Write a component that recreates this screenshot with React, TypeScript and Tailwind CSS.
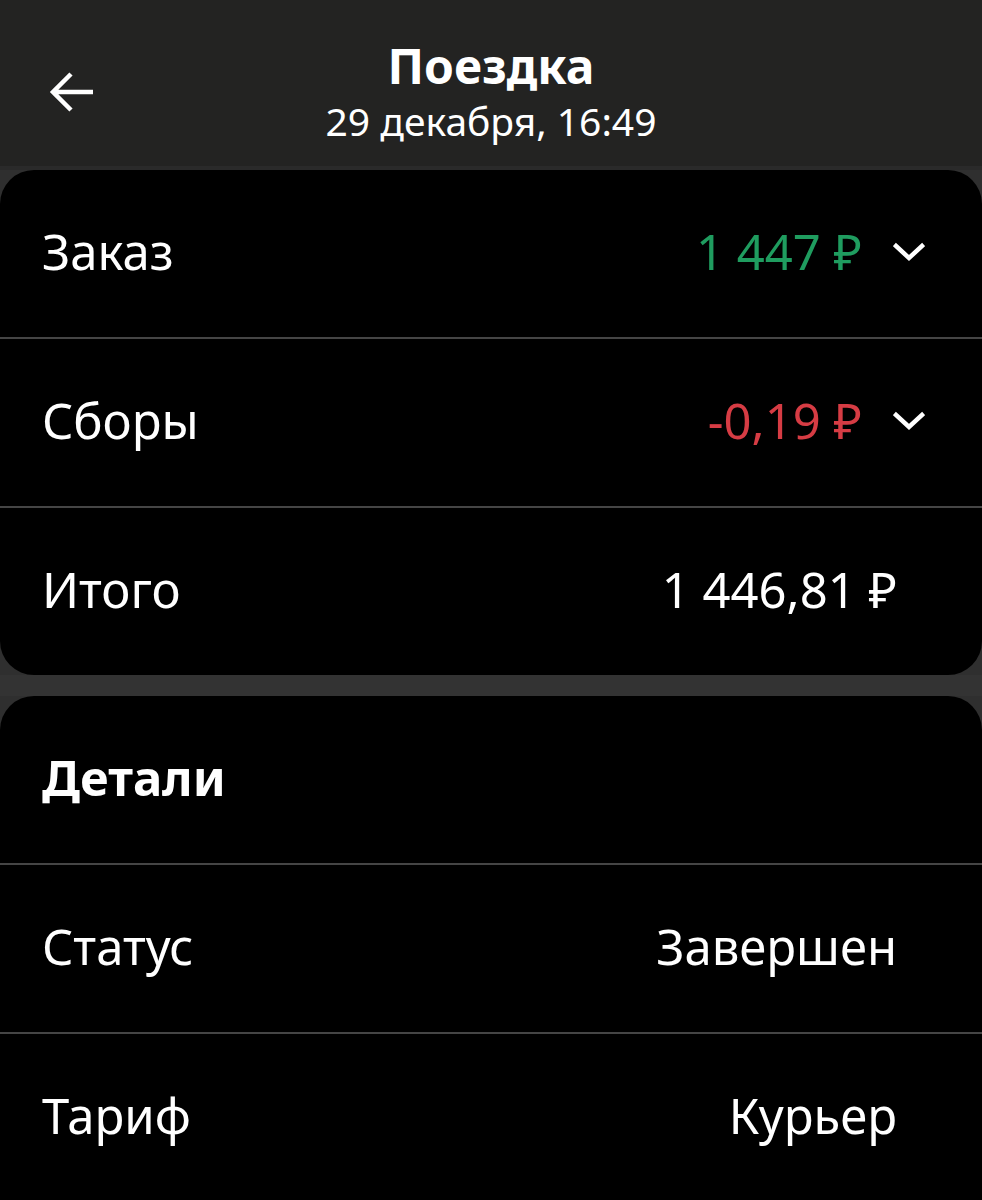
import React from 'react';

const font = { fontFamily: '"Noto Sans", "Open Sans", sans-serif' };

const Chevron = () => (
  <svg width="32" height="20" viewBox="0 0 32 20" fill="none" className="ml-[31px]">
    <path d="M3 4l13 12L29 4" stroke="#fff" strokeWidth="4.5" strokeLinecap="square" />
  </svg>
);

type RowProps = {
  label: string;
  value?: string;
  valueClass?: string;
  chevron?: boolean;
  bold?: boolean;
  divider?: boolean;
};

const Row: React.FC<RowProps> = ({ label, value, valueClass = 'text-white', chevron, bold, divider }) => (
  <>
    <div className="h-[167px] flex items-center justify-between pl-[42px] pr-[85px] pb-[4px]">
      <span className={`text-[49px] text-white ${bold ? 'font-bold' : ''}`}>{label}</span>
      {value && (
        <div className={`flex items-center ${chevron ? '-mr-[28px]' : ''}`}>
          <span className={`text-[49px] ${valueClass}`}>{value}</span>
          {chevron && <Chevron />}
        </div>
      )}
    </div>
    {divider && <div className="h-[2px] bg-[#454545]" />}
  </>
);

export default function App() {
  return (
    <div className="min-h-[1200px] bg-[#2f2f2f] overflow-hidden" style={font}>
      {/* Header */}
      <div className="h-[166px] bg-[#232322] relative flex flex-col items-center pt-[36px]">
        <button className="absolute left-[47px] top-[70px] w-[48px] h-[44px]">
          <svg width="48" height="44" viewBox="0 0 48 44" fill="none">
            <path d="M46 22H6M24 4L6 22l18 18" stroke="#fff" strokeWidth="4.5" />
          </svg>
        </button>
        <div className="text-[48px] font-bold text-white leading-[60px]">Поездка</div>
        <div className="text-[39px] text-white leading-[50px]">29 декабря, 16:49</div>
      </div>
      <div className="h-[4px] bg-[#2a2a2a]" />

      {/* Summary card */}
      <div className="bg-black rounded-[34px] overflow-hidden">
        <Row label="Заказ" value="1 447 ₽" valueClass="text-[#1f9c5f]" chevron divider />
        <Row label="Сборы" value="-0,19 ₽" valueClass="text-[#d63c44]" chevron divider />
        <Row label="Итого" value="1 446,81 ₽" />
      </div>

      <div className="h-[21px] bg-[#333333]" />

      {/* Details card */}
      <div className="bg-black rounded-t-[34px] overflow-hidden min-h-[503px]">
        <Row label="Детали" bold divider />
        <Row label="Статус" value="Завершен" divider />
        <Row label="Тариф" value="Курьер" />
      </div>
    </div>
  );
}
